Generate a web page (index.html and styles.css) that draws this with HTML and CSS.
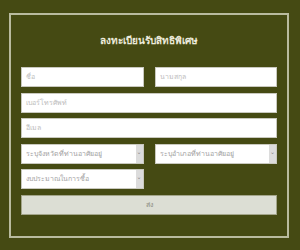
FILE: index.html
```html
<!DOCTYPE html>
<html lang="th">
<head>
<meta charset="UTF-8" />
<meta name="viewport" content="width=device-width, initial-scale=1" />
<title>ลงทะเบียนรับสิทธิพิเศษ</title>
<link rel="stylesheet" href="styles.css">
</head>
<body>
<div class="frame">
    <h1 class="title">ลงทะเบียนรับสิทธิพิเศษ</h1>
    <form class="form">
        <div class="field">ชื่อ</div>
        <div class="field">นามสกุล</div>
        <div class="field wide">เบอร์โทรศัพท์</div>
        <div class="field wide">อีเมล</div>
        <div class="field select">ระบุจังหวัดที่ท่านอาศัยอยู่<span class="arrow">&#8964;</span></div>
        <div class="field select">ระบุอำเภอที่ท่านอาศัยอยู่<span class="arrow">&#8964;</span></div>
        <div class="field select">งบประมาณในการซื้อ<span class="arrow">&#8964;</span></div>
        <div class="send">ส่ง</div>
    </form>
</div>
</body>
</html>
```

FILE: styles.css
```css
body {
margin: 0;
background: #454a13;
font-family: "Noto Sans", "DejaVu Sans", sans-serif;
}
.frame {
box-sizing: border-box;
width: 280px;
height: 225px;
margin: 13px 0 0 9px;
border: 2px solid #b9bb9f;
padding: 18px 10px 0 10px;
}
.title {
margin: 0 0 20px;
height: 14px;
line-height: 14px;
text-align: center;
font-size: 10px;
font-weight: bold;
color: #ecebdc;
}
.form {
display: grid;
grid-template-columns: 1fr 1fr;
column-gap: 11px;
row-gap: 5.6px;
}
.field {
box-sizing: border-box;
height: 20px;
background: #fff;
border: 1px solid #c9c9bf;
padding: 0 4px;
font-size: 7px;
line-height: 18px;
color: #bdbdbd;
display: flex;
align-items: center;
}
.wide {
grid-column: span 2;
}
.select {
color: #a2a2a2;
padding-right: 0;
justify-content: space-between;
}
.arrow {
width: 7px;
height: 18px;
background: #dcdcdc;
color: #888;
font-size: 6px;
line-height: 14px;
text-align: center;
}
.send {
grid-column: span 2;
box-sizing: border-box;
height: 20px;
background: #dcded4;
border: 1px solid #a3a58a;
text-align: center;
font-size: 7px;
line-height: 18px;
color: #8a8a80;
}
```
